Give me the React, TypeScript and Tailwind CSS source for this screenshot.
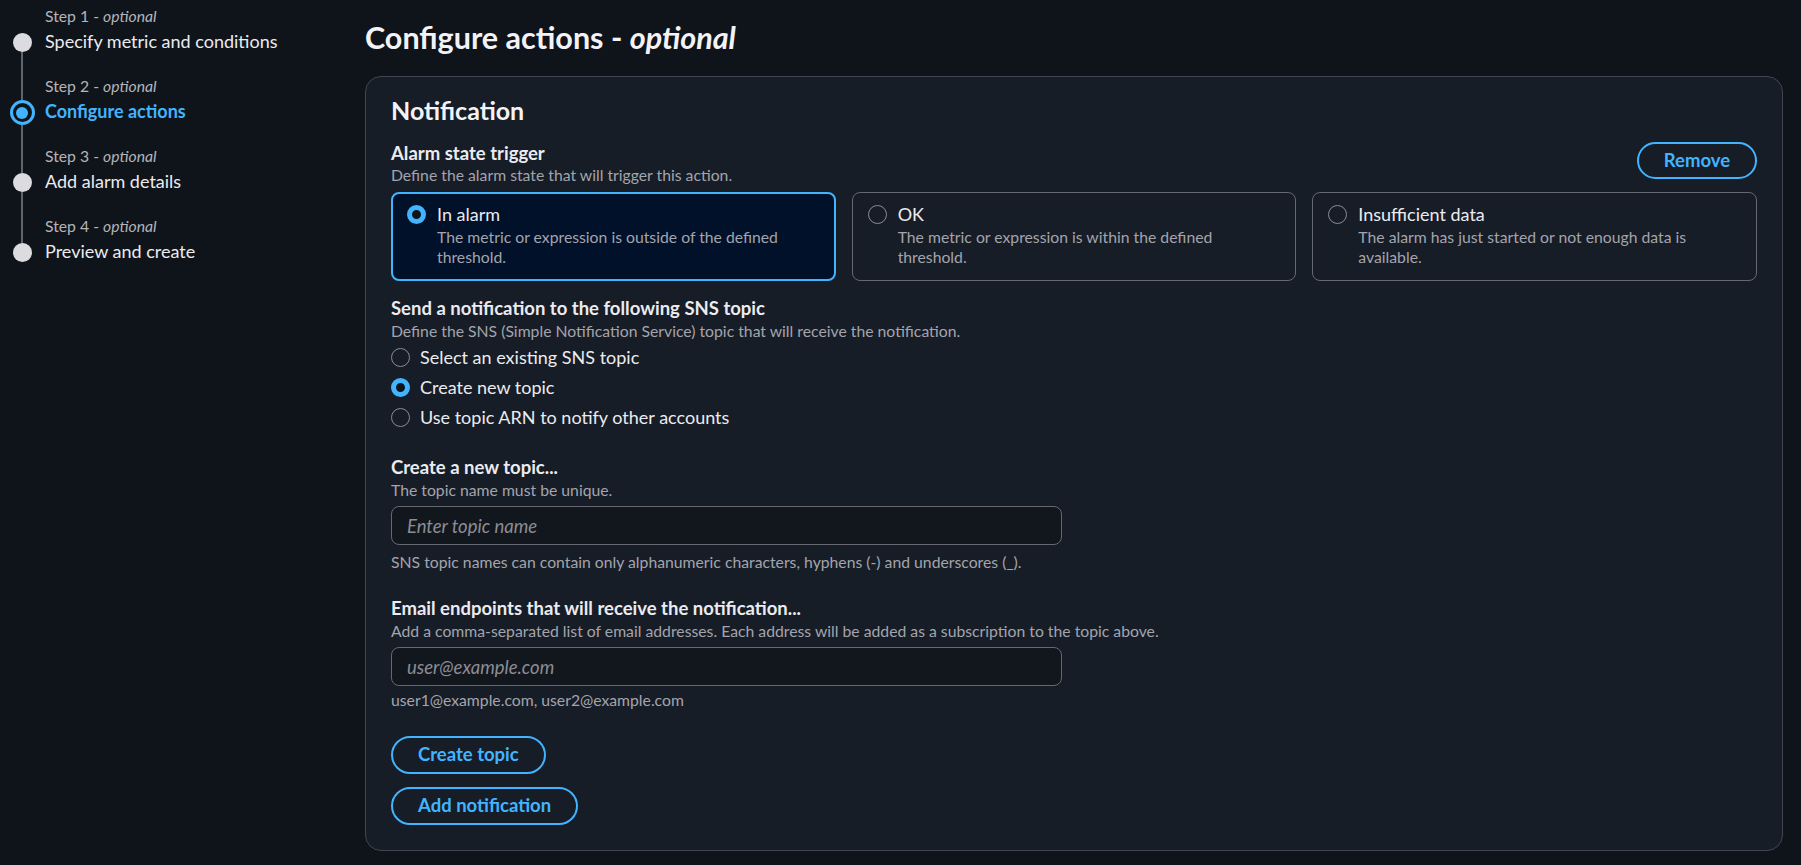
import React from "react"

type Step = { n: number; title: string; active?: boolean }

const steps: Step[] = [
  { n: 1, title: "Specify metric and conditions" },
  { n: 2, title: "Configure actions", active: true },
  { n: 3, title: "Add alarm details" },
  { n: 4, title: "Preview and create" },
]

const Radio = ({ checked }: { checked?: boolean }) => (
  <span
    className={`block w-[19px] h-[19px] shrink-0 rounded-full ${
      checked ? "border-[5px] border-[#42b4ff] bg-[#0f141a]" : "border-[1.5px] border-[#8c8c94]"
    }`}
  />
)

const Tile = ({ label, desc, checked }: { label: string; desc: string; checked?: boolean }) => (
  <div
    className={`h-[89px] rounded-[8px] flex gap-[11px] ${
      checked
        ? "border-2 border-[#42b4ff] bg-[#001129] pl-[14px] pt-[8px]"
        : "border border-[#656871] pl-[15px] pt-[9px]"
    }`}
  >
    <div className="h-[24px] flex items-center">
      <Radio checked={checked} />
    </div>
    <div className="max-w-[370px]">
      <div className="text-[18px] leading-[24px] text-[#ebebf0]">{label}</div>
      <div className="text-[15.75px] leading-[20px] text-[#a4a4ad] mt-[1px]">{desc}</div>
    </div>
  </div>
)

const OutlineButton = ({ children }: { children: React.ReactNode }) => (
  <button className="h-[38px] rounded-full border-2 border-[#42b4ff] px-[25px] text-[18.5px] font-bold text-[#42b4ff] w-fit">
    {children}
  </button>
)

export default function App() {
  return (
    <div className="min-h-[865px] w-full bg-[#0f141a] flex font-['Lato',sans-serif] text-[#dedee3]">
      {/* wizard steps */}
      <aside className="w-[365px] shrink-0 pl-[9px] pt-[2px]">
        {steps.map((s, i) => (
          <div key={s.n} className="flex gap-[10px] h-[70px]">
            <div className="w-[26px] flex flex-col items-center">
              <div className={`w-[2px] ${s.active ? "h-[28px]" : "h-[31px]"} ${i === 0 ? "" : "bg-[#5f6570]"}`} />
              {s.active ? (
                <span className="w-[25px] h-[25px] rounded-full border-[3px] border-[#42b4ff] flex items-center justify-center">
                  <span className="w-[12px] h-[12px] rounded-full bg-[#42b4ff]" />
                </span>
              ) : (
                <span className="w-[19px] h-[19px] rounded-full bg-[#dcdce0]" />
              )}
              <div className={`w-[2px] flex-1 ${i === steps.length - 1 ? "" : "bg-[#5f6570]"}`} />
            </div>
            <div>
              <div className="pt-[4px] text-[15.75px] leading-[20px] text-[#b4b4bb]">
                Step {s.n} - <i>optional</i>
              </div>
              <div
                className={`text-[18px] leading-[30px] ${
                  s.active ? "font-bold text-[#42b4ff]" : "text-[#ebebf0]"
                }`}
              >
                {s.title}
              </div>
            </div>
          </div>
        ))}
      </aside>

      <main className="flex-1 pr-[18px] pt-[19px]">
        <h1 className="text-[30.5px] leading-[36px] font-bold text-[#f3f3f7]">
          Configure actions - <i>optional</i>
        </h1>

        <section className="mt-[21px] rounded-[16px] border border-[#424650] bg-[#161d26] px-[25px] pt-[17px] pb-[25px]">
          <h2 className="text-[25px] leading-[32px] font-bold text-[#f3f3f7]">Notification</h2>

          <div className="mt-[15px] flex justify-between items-start">
            <div>
              <div className="text-[18.5px] leading-[24px] font-bold text-[#ebebf0]">Alarm state trigger</div>
              <div className="text-[15.75px] leading-[20px] text-[#a4a4ad]">
                Define the alarm state that will trigger this action.
              </div>
            </div>
            <button className="mt-[1px] h-[37px] w-[120px] rounded-full border-2 border-[#42b4ff] text-[18.5px] font-bold text-[#42b4ff]">
              Remove
            </button>
          </div>

          <div className="mt-[7px] grid grid-cols-3 gap-[16px]">
            <Tile checked label="In alarm" desc="The metric or expression is outside of the defined threshold." />
            <Tile label="OK" desc="The metric or expression is within the defined threshold." />
            <Tile
              label="Insufficient data"
              desc="The alarm has just started or not enough data is available."
            />
          </div>

          <div className="mt-[15px] text-[18.5px] leading-[24px] font-bold text-[#ebebf0]">
            Send a notification to the following SNS topic
          </div>
          <div className="mt-[1px] text-[15.75px] leading-[20px] text-[#a4a4ad]">
            Define the SNS (Simple Notification Service) topic that will receive the notification.
          </div>
          <div className="mt-[1px] flex flex-col">
            {[
              { t: "Select an existing SNS topic" },
              { t: "Create new topic", c: true },
              { t: "Use topic ARN to notify other accounts" },
            ].map((o) => (
              <label key={o.t} className="h-[30px] flex items-center gap-[10px] text-[18px] text-[#ebebf0]">
                <Radio checked={o.c} />
                {o.t}
              </label>
            ))}
          </div>

          <div className="mt-[23px] text-[18.5px] leading-[24px] font-bold text-[#ebebf0]">Create a new topic...</div>
          <div className="mt-[1px] text-[15.75px] leading-[20px] text-[#a4a4ad]">The topic name must be unique.</div>
          <input
            placeholder="Enter topic name"
            className="mt-[6px] block h-[39px] w-[671px] rounded-[8px] border border-[#656871] bg-[#12171e] px-[15px] text-[18.5px] text-[#ebebf0] outline-none placeholder:italic placeholder:text-[#8c8c94]"
          />
          <div className="mt-[7px] text-[15.75px] leading-[20px] text-[#a4a4ad]">
            SNS topic names can contain only alphanumeric characters, hyphens (-) and underscores (_).
          </div>

          <div className="mt-[24px] text-[18.5px] leading-[24px] font-bold text-[#ebebf0]">
            Email endpoints that will receive the notification...
          </div>
          <div className="mt-[1px] text-[15.75px] leading-[20px] text-[#a4a4ad]">
            Add a comma-separated list of email addresses. Each address will be added as a subscription to the topic above.
          </div>
          <input
            placeholder="user@example.com"
            className="mt-[6px] block h-[39px] w-[671px] rounded-[8px] border border-[#656871] bg-[#12171e] px-[15px] text-[18.5px] text-[#ebebf0] outline-none placeholder:italic placeholder:text-[#8c8c94]"
          />
          <div className="mt-[4px] text-[15.75px] leading-[20px] text-[#a4a4ad]">user1@example.com, user2@example.com</div>

          <div className="mt-[26px] flex flex-col gap-[13px]">
            <OutlineButton>Create topic</OutlineButton>
            <OutlineButton>Add notification</OutlineButton>
          </div>
        </section>
      </main>
    </div>
  )
}
